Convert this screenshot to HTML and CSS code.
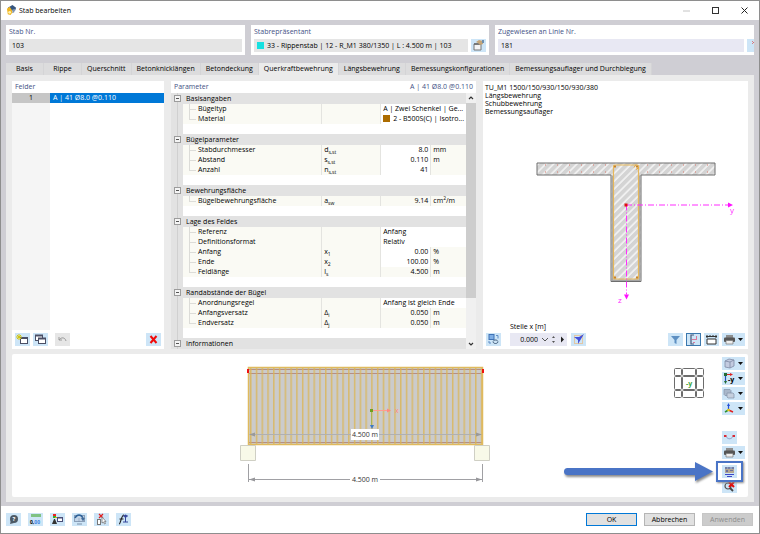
FILE: index.html
```html
<!DOCTYPE html>
<html lang="de">
<head>
  <meta charset="UTF-8" />
  <meta name="viewport" content="width=device-width, initial-scale=1.0"/>
  <title>Stab bearbeiten</title>
  <link rel="stylesheet" href="styles.css">
</head>
<body>
  <div class="dialog">
    <header class="titlebar">
      <svg class="app-icon" viewBox="0 0 12 12">
        <path d="M2 3 L7 0 L11 3 L10 6 L5 6Z" fill="#35557f"/>
        <path d="M1 4 L4 2 L6 5 L7 8 L5 11 L2 10Z" fill="#f0b51f"/>
        <circle cx="4" cy="8" r="1.5" fill="#fff3b0"/>
        <path d="M7 5 L10 4 L9 8 L7 9Z" fill="#7f93ad"/>
      </svg>
      <h1>Stab bearbeiten</h1>
      <button class="win-btn" aria-label="Minimieren" disabled><svg viewBox="0 0 9 9"><path d="M1 5h7" stroke="#c4c4c4"/></svg></button>
      <button class="win-btn" aria-label="Maximieren"><svg viewBox="0 0 9 9"><rect x="1.5" y="1.5" width="6" height="6" fill="none" stroke="#333"/></svg></button>
      <button class="win-btn" aria-label="Schließen"><svg viewBox="0 0 9 9"><path d="M1.500 1.500l6 6m0-6l-6 6" stroke="#222"/></svg></button>
    </header>

    <main class="workspace">
      <!-- Member number, representative, lines -->
      <section class="head-cards">
        <div class="card">
          <label for="memberNo">Stab Nr.</label>
          <div class="card-row"><input id="memberNo" class="field" type="text" value="103" readonly></div>
        </div>
        <div class="card">
          <label for="memberRep">Stabrepräsentant</label>
          <div class="card-row">
            <div class="field field-swatch">
              <span class="swatch cyan"></span>
              <input id="memberRep" type="text" value="33 - Rippenstab | 12 - R_M1 380/1350 | L : 4.500 m | 103" readonly>
            </div>
            <button class="icon-btn" aria-label="Bearbeiten"><svg viewBox="0 0 15 13"><path d="M3 5h7v6H3z" fill="#f4f4f4" stroke="#777"/><path d="M3 5h7" stroke="#666" stroke-width="1.500"/><path d="M5 3l3-2 4 1 0 3-3 1-2-2z" fill="#c4a578"/><path d="M11 1h2v3h-2z" fill="#6d8fb0"/></svg></button>
          </div>
        </div>
        <div class="card card-cut">
          <label for="lineNo">Zugewiesen an Linie Nr.</label>
          <div class="card-row">
            <input id="lineNo" class="field editable" type="text" value="181">
            <button class="icon-btn cut" aria-label="Auswählen"><svg viewBox="0 0 7 13"><path d="M5 2l2 2M5 5l2-2" stroke="#d66" stroke-width=".8"/></svg></button>
          </div>
        </div>
      </section>

      <nav class="tabs">
        <button class="tab wide">Basis</button>
        <button class="tab wide">Rippe</button>
        <button class="tab">Querschnitt</button>
        <button class="tab">Betonknicklängen</button>
        <button class="tab">Betondeckung</button>
        <button class="tab active">Querkraftbewehrung</button>
        <button class="tab">Längsbewehrung</button>
        <button class="tab">Bemessungskonfigurationen</button>
        <button class="tab">Bemessungsauflager und Durchbiegung</button>
      </nav>

      <div class="tab-page">
        <div class="panels">
          <!-- Field list -->
          <section class="panel spans">
            <h2 class="panel-title">Felder</h2>
            <div class="span-list">
              <table>
                <tr class="selected"><th scope="row">1</th><td>A | 41 Ø8.0 @0.110</td></tr>
              </table>
            </div>
            <div class="toolbar">
              <button class="icon-btn" aria-label="Neu"><svg viewBox="0 0 15 13"><rect x="5.500" y="4.500" width="7" height="6" fill="#fff" stroke="#4a4f66"/><path d="M5 5h8" stroke="#4a4f66" stroke-width="2"/><path d="M4 1v6M1 4h6M2 2l4 4M6 2L2 6" stroke="#d3c511"/></svg></button>
              <button class="icon-btn" aria-label="Kopieren"><svg viewBox="0 0 15 13"><rect x="2.500" y="2.500" width="7" height="5" fill="#fff" stroke="#4a4f66"/><path d="M2 2.500h8" stroke="#4a4f66" stroke-width="2"/><rect x="5.500" y="5.500" width="7" height="5" fill="#fff" stroke="#4a4f66"/><path d="M5 5.500h8" stroke="#4a4f66" stroke-width="2"/></svg></button>
              <button class="icon-btn off" aria-label="Rückgängig" disabled><svg viewBox="0 0 15 13"><path d="M4 4v3h3M4 7c2-3 6-3 7 1" fill="none" stroke="#9a9a9a"/></svg></button>
              <button class="icon-btn push" aria-label="Löschen"><svg viewBox="0 0 15 13"><path d="M4.500 3l6 7m0-7l-6 7" stroke="#f00a0a" stroke-width="2"/></svg></button>
            </div>
          </section>

          <!-- Parameter tree -->
          <section class="panel params">
            <h2 class="panel-title">Parameter <span>A | 41 Ø8.0 @0.110</span></h2>
            <div class="tree-wrap">
              <table class="tree">
                <colgroup><col class="c-gutter"><col class="c-name"><col class="c-sym"><col class="c-val"><col class="c-unit"></colgroup>
                <tr class="group"><td><button class="toggle" aria-label="Einklappen"></button></td><th colspan="4">Basisangaben</th></tr>
                <tr><td></td><td>Bügeltyp</td><td></td><td colspan="2" class="text">A | Zwei Schenkel | Ge...</td></tr>
                <tr class="last"><td></td><td>Material</td><td></td><td colspan="2" class="text"><span class="swatch brown"></span>2 - B500S(C) | Isotro...</td></tr>
                <tr class="empty"><td></td><td colspan="4"></td></tr>
                <tr class="group"><td><button class="toggle" aria-label="Einklappen"></button></td><th colspan="4">Bügelparameter</th></tr>
                <tr><td></td><td>Stabdurchmesser</td><td>d<sub>s,st</sub></td><td class="num">8.0</td><td>mm</td></tr>
                <tr><td></td><td>Abstand</td><td>s<sub>s,st</sub></td><td class="num">0.110</td><td>m</td></tr>
                <tr class="last"><td></td><td>Anzahl</td><td>n<sub>s,st</sub></td><td class="num">41</td><td></td></tr>
                <tr class="empty"><td></td><td colspan="4"></td></tr>
                <tr class="group"><td><button class="toggle" aria-label="Einklappen"></button></td><th colspan="4">Bewehrungsfläche</th></tr>
                <tr class="last"><td></td><td>Bügelbewehrungsfläche</td><td>a<sub>sw</sub></td><td class="num locked">9.14</td><td>cm<sup>2</sup>/m</td></tr>
                <tr class="empty"><td></td><td colspan="4"></td></tr>
                <tr class="group"><td><button class="toggle" aria-label="Einklappen"></button></td><th colspan="4">Lage des Feldes</th></tr>
                <tr><td></td><td>Referenz</td><td></td><td colspan="2" class="text">Anfang</td></tr>
                <tr><td></td><td>Definitionsformat</td><td></td><td colspan="2" class="text">Relativ</td></tr>
                <tr><td></td><td>Anfang</td><td>x<sub>1</sub></td><td class="num">0.00</td><td>%</td></tr>
                <tr><td></td><td>Ende</td><td>x<sub>2</sub></td><td class="num">100.00</td><td>%</td></tr>
                <tr class="last"><td></td><td>Feldlänge</td><td>l<sub>s</sub></td><td class="num locked">4.500</td><td>m</td></tr>
                <tr class="empty"><td></td><td colspan="4"></td></tr>
                <tr class="group"><td><button class="toggle" aria-label="Einklappen"></button></td><th colspan="4">Randabstände der Bügel</th></tr>
                <tr><td></td><td>Anordnungsregel</td><td></td><td colspan="2" class="text">Anfang ist gleich Ende</td></tr>
                <tr><td></td><td>Anfangsversatz</td><td>Δ<sub>i</sub></td><td class="num locked">0.050</td><td>m</td></tr>
                <tr class="last"><td></td><td>Endversatz</td><td>Δ<sub>j</sub></td><td class="num locked">0.050</td><td>m</td></tr>
                <tr class="empty"><td></td><td colspan="4"></td></tr>
                <tr class="group"><td><button class="toggle" aria-label="Einklappen"></button></td><th colspan="4">Informationen</th></tr>
              </table>
              <div class="scrollbar">
                <svg viewBox="0 0 10 10"><path d="M3 6l2-2 2 2" fill="none" stroke="#333" stroke-width="1.200"/></svg>
                <span class="thumb"></span>
                <svg viewBox="0 0 10 10"><path d="M3 4l2 2 2-2" fill="none" stroke="#333" stroke-width="1.200"/></svg>
              </div>
            </div>
          </section>

          <!-- Cross-section preview -->
          <section class="panel preview">
            <p class="legend">TU_M1 1500/150/930/150/930/380<br>Längsbewehrung<br>Schubbewehrung<br>Bemessungsauflager</p>
            <svg class="section-svg" viewBox="0 0 265 203">
              <defs>
                <pattern id="hatch" width="5.500" height="5.500" patternUnits="userSpaceOnUse" patternTransform="rotate(45)">
                  <rect width="6" height="6" fill="#d4d4d4"/>
                  <path d="M1 0v6" stroke="#fff" stroke-width="1.200"/>
                </pattern>
              </defs>
              <path d="M54 46.500H232V58.500H158V165H128V58.500H54Z" fill="url(#hatch)" stroke="#6e6e6e" stroke-width="1"/>
              <path d="M129.200 59V163.800H156.800V59" fill="none" stroke="#a5a5a5" stroke-width="1.400"/>
              <rect x="130.500" y="48.500" width="25" height="114" rx="1" fill="none" stroke="#e6b75a" stroke-width="1.200"/>
              <path d="M153 48l-2 3M156 51l-3 2" stroke="#e6a93a"/>
              <g fill="#d9796a">
                <path d="M62 48h1v1h-1zM74 48h1v1h-1zM86 48h1v1h-1zM98 48h1v1h-1zM110 48h1v1h-1zM122 48h1v1h-1zM164 48h1v1h-1zM176 48h1v1h-1zM188 48h1v1h-1zM200 48h1v1h-1zM212 48h1v1h-1zM224 48h1v1h-1z"/>
                <path d="M62 55h1v1h-1zM74 55h1v1h-1zM86 55h1v1h-1zM98 55h1v1h-1zM110 55h1v1h-1zM122 55h1v1h-1zM164 55h1v1h-1zM176 55h1v1h-1zM188 55h1v1h-1zM200 55h1v1h-1zM212 55h1v1h-1zM224 55h1v1h-1z"/>
                <path d="M131 49h2v2h-2zM153 49h2v2h-2zM131 160h2v2h-2zM153 160h2v2h-2z" fill="#c98328"/>
              </g>
              <path d="M143 88.500H246M143.500 88V178" fill="none" stroke="#ff2cff" stroke-dasharray="6 2 1 2"/>
              <path d="M245 86l5 2.500-5 2.500zM141 178h5l-2.500 5z" fill="#ff10ff"/>
              <rect x="141.500" y="87" width="3" height="3" fill="#e01010"/>
              <text x="247" y="96" class="axis">y</text>
              <text x="135" y="186" class="axis">z</text>
            </svg>
            <div class="toolbar">
              <button class="icon-btn" aria-label="Ansicht wechseln"><svg viewBox="0 0 15 13"><rect x="3" y="1.500" width="5" height="5" fill="#7eaee5" stroke="#3f72b5"/><path d="M7 8.500c1-2 4-2 5 0M12 9c-1 2-4 2-5 0" fill="none" stroke="#3c5675"/><path d="M10 2.500h2v3M3 8v2h2" fill="none" stroke="#5f8cc5"/></svg></button>
              <div class="location">
                <label for="loc">Stelle x [m]</label>
                <div class="spin">
                  <input id="loc" type="text" value="0.000">
                  <button aria-label="Liste"><svg viewBox="0 0 9 13"><path d="M2 5l3 3 3-3" fill="none" stroke="#555"/></svg></button>
                  <button aria-label="Schritt"><svg viewBox="0 0 9 13"><path d="M3 5l1.500-2L6 5zM3 8l1.500 2L6 8z" fill="#555"/></svg></button>
                  <button aria-label="Weiter"><svg viewBox="0 0 9 13"><path d="M3 3.500v6l3-3z" fill="#222"/></svg></button>
                </div>
              </div>
              <button class="icon-btn" aria-label="Stelle wählen"><svg viewBox="0 0 15 13"><rect x="3.500" y="2.500" width="8" height="8" fill="none" stroke="#e2c7a5"/><path d="M3 4h5l5-3-6 10V7z" fill="#4450d8"/></svg></button>
              <button class="icon-btn push" aria-label="Filter"><svg viewBox="0 0 15 13"><path d="M3 3h9L8.500 7v4l-2-1V7z" fill="#5d8fc2"/></svg></button>
              <button class="icon-btn pressed" aria-label="Bewehrung zeigen"><svg viewBox="0 0 15 13"><path d="M8 2H5v9h3" fill="none" stroke="#4a5878" stroke-width="1.200"/><path d="M6 6.500h4M10.500 3v4M7 9.500h2" stroke="#d9799c"/></svg></button>
              <button class="icon-btn" aria-label="Maße"><svg viewBox="0 0 15 13"><path d="M3 6h9v5H3z" fill="#fff" stroke="#333"/><path d="M2 3.500h11M3 2v3M12 2v3M6 2v1M9 2v1" stroke="#333"/></svg></button>
              <button class="icon-btn drop" aria-label="Drucken"><svg viewBox="0 0 23 13"><path d="M4 2h7v3H4z" fill="#8d8d8d"/><rect x="2" y="4.500" width="11" height="4.500" rx="1" fill="#555"/><path d="M4 7.500h7V11H4z" fill="#eee" stroke="#777" stroke-width=".7"/><path d="M16 5h5l-2.500 3z" fill="#111"/></svg></button>
            </div>
          </section>
        </div>

        <!-- Member view -->
        <section class="panel member-view">
          <svg class="beam-svg" viewBox="0 0 706 143">
            <defs>
              <pattern id="stirrups" x="238" width="5.770" height="10" patternUnits="userSpaceOnUse">
                <path d="M.8 0v10" stroke="#dcb552" stroke-width="1.200"/>
              </pattern>
            </defs>
            <rect x="236.500" y="13.500" width="234" height="77" fill="#cbcbcb"/>
            <path d="M237 15.500H470M237 19.500H470M237 88.500H470" stroke="#b78f82"/>
            <rect x="236" y="14" width="234" height="76" fill="url(#stirrups)"/>
            <rect x="236.500" y="13.500" width="234" height="77" fill="none" stroke="#e0ba5d" stroke-width="1.500"/>
            <path d="M235 15h2v4h-2zM470 15h2v4h-2z" fill="#f01010"/>
            <path d="M238 80.500H469" stroke="#b0b0b0"/>
            <path d="M237 80.500l6-2v4zM470 80.500l-6-2v4z" fill="#999"/>
            <path d="M359.500 56v15" stroke="#a7b556"/>
            <path d="M360 56.500h16" stroke="#ff9c90"/>
            <path d="M375 54.500l4 2-4 2z" fill="#ff8a80"/>
            <rect x="358" y="55" width="3" height="3" fill="#6f9f20"/>
            <path d="M358 71h4l-2 4z" fill="#3e7bc4"/>
            <text x="383" y="59" class="axis-x">x</text>
            <rect x="339" y="75" width="28" height="11" fill="#fff"/>
            <text x="353" y="83" class="dim">4.500 m</text>
            <path d="M228.500 91.500h15v15h-15zM462.500 91.500h15v15h-15z" fill="#f8f9e8" stroke="#cfcfc4"/>
            <path d="M236.500 110v18M470.500 110v18M237 125.500H338M368 125.500H470" stroke="#a0a0a4"/>
            <path d="M237 125.500l6-2v4zM470 125.500l-6-2v4z" fill="#97979b"/>
            <text x="353" y="128" class="dim">4.500 m</text>
          </svg>
          <svg class="nav-cube" viewBox="0 0 31 31">
            <g fill="#fff" stroke="#6c6c6c">
              <rect x=".5" y=".5" width="7" height="7" rx="1"/><rect x="8.500" y=".5" width="13" height="7" rx="1"/><rect x="22.500" y=".5" width="7" height="7" rx="1"/>
              <rect x=".5" y="8.500" width="7" height="13" rx="1"/><rect x="8.500" y="8.500" width="13" height="13" rx="1"/><rect x="22.500" y="8.500" width="7" height="13" rx="1"/>
              <rect x=".5" y="22.500" width="7" height="7" rx="1"/><rect x="8.500" y="22.500" width="13" height="7" rx="1"/><rect x="22.500" y="22.500" width="7" height="7" rx="1"/>
            </g>
            <text x="15" y="18" class="cube-text">-y</text>
          </svg>
          <div class="side-tools">
            <button class="icon-btn drop" aria-label="Darstellung"><svg viewBox="0 0 23 13"><path d="M3 4l4-2 5 1v6l-4 2-5-1z" fill="#c3cbe0" stroke="#7f8aa5" stroke-width=".8"/><path d="M3 4l5 1 4-2M8 5v6" fill="none" stroke="#7f8aa5" stroke-width=".8"/><path d="M16 5h5l-2.500 3z" fill="#111"/></svg></button>
            <button class="icon-btn drop" aria-label="Blickrichtung"><svg viewBox="0 0 23 13"><path d="M3 2.500h6" stroke="#d22"/><path d="M3.500 3v7" stroke="#2450b8" stroke-width="1.200"/><path d="M2 9h3l-1.500 3zM2 1h3v3h-3z" fill="#246c36"/><path d="M8 1l3 1.500L8 4z" fill="#d22"/><text x="6" y="10" class="tool-text">-y</text><path d="M16 5h5l-2.500 3z" fill="#111"/></svg></button>
            <button class="icon-btn drop" aria-label="Ebenen"><svg viewBox="0 0 23 13"><path d="M2 2.500h6l1 1v5H3l-1-1z" fill="#a9b7ca" stroke="#8291a8" stroke-width=".7"/><path d="M5 6h6l1 1v4H6l-1-1z" fill="#c5cfde" stroke="#8291a8" stroke-width=".7"/><path d="M16 5h5l-2.500 3z" fill="#111"/></svg></button>
            <button class="icon-btn drop" aria-label="Achsen"><svg viewBox="0 0 23 13"><path d="M6.500 8V3" stroke="#2450d8" stroke-width="1.200"/><path d="M5 4l1.500-3L8 4z" fill="#2450d8"/><path d="M6.500 8L11 10" stroke="#e02020" stroke-width="1.500"/><path d="M6.500 8L3 10" stroke="#2c8f34" stroke-width="1.500"/><circle cx="6.500" cy="8" r="1.300" fill="#e8d018"/><path d="M16 5h5l-2.500 3z" fill="#111"/></svg></button>
            <button class="icon-btn second" aria-label="Auflager"><svg viewBox="0 0 15 13"><path d="M4 5.500c2 3 5 3 7 0" fill="none" stroke="#8c9ac8"/><path d="M2 4h2.500v2H2zM10.500 4H13v2h-2.500z" fill="#d92b35"/></svg></button>
            <button class="icon-btn drop" aria-label="Drucken"><svg viewBox="0 0 23 13"><path d="M4 2h7v3H4z" fill="#8d8d8d"/><rect x="2" y="4.500" width="11" height="4.500" rx="1" fill="#555"/><path d="M4 7.500h7V11H4z" fill="#eee" stroke="#777" stroke-width=".7"/><path d="M16 5h5l-2.500 3z" fill="#111"/></svg></button>
            <div class="marked">
              <button class="icon-btn" aria-label="Bewehrung"><svg viewBox="0 0 15 13"><path d="M3 3h9M4 2v2M7 2v2M11 2v2" stroke="#555d88"/><path d="M3 4h9v4H3z" fill="#b5a690"/><path d="M4 5h2v2H4zM8 5h3v1H8z" fill="#6a6d9c"/><path d="M3 9.500h9M5 11.500h5" stroke="#3d46c8"/></svg></button>
              <svg class="pointer" viewBox="0 0 154 28">
                <path d="M7.500 12.500H136" stroke="#4a74c6" stroke-width="7" stroke-linecap="round"/>
                <path d="M135 3L153 12.500 135 22Z" fill="#4a74c6"/>
              </svg>
            </div>
            <button class="icon-btn" aria-label="Zoom aufheben"><svg viewBox="0 0 15 13"><circle cx="6" cy="6" r="3" fill="none" stroke="#555" stroke-width="1.200"/><path d="M8 8l3 3" stroke="#444" stroke-width="1.800"/><path d="M7 2l5 5m0-5L7 7" stroke="#e30b0b" stroke-width="2"/></svg></button>
          </div>
        </section>
      </div>
    </main>

    <footer>
      <button class="icon-btn" aria-label="Hilfe"><svg viewBox="0 0 15 13"><circle cx="8" cy="6" r="4" fill="#4d5a66"/><path d="M4 11l1-4 3 3z" fill="#4d5a66"/><text x="8" y="8" class="help-text">?</text></svg></button>
      <button class="icon-btn" aria-label="Einheiten"><svg viewBox="0 0 15 13"><path d="M3 1h10v3H3z" fill="#7fc283"/><text x="2" y="11" class="unit-text">0,<tspan fill="#3c7fe0">00</tspan></text></svg></button>
      <button class="icon-btn" aria-label="Farben"><svg viewBox="0 0 15 13"><path d="M3 1h3v2H3z" fill="#e22"/><path d="M3 3h3v2H3z" fill="#3a3"/><path d="M2 11l2-5h1l2 5z" fill="#333"/><path d="M5 4h3v1H5z" fill="#dba800"/><rect x="7.500" y="4.500" width="5" height="4" fill="#fff" stroke="#4a4f78"/><path d="M7 5h6" stroke="#4a4f78"/></svg></button>
      <button class="icon-btn" aria-label="Ansicht"><svg viewBox="0 0 15 13"><rect x="2.500" y="2.500" width="10" height="6" fill="#c3d5e8" stroke="#8a9fb8"/><path d="M3 5c2-4 6-4 8 0" fill="none" stroke="#2d6198" stroke-width="1.500"/><path d="M9 5h4l-2 3zM7 5v4" fill="#2d6198" stroke="#7a8fa8" stroke-width=".5"/><path d="M5 11h5" stroke="#7a8fa8"/></svg></button>
      <button class="icon-btn" aria-label="Auswahl aufheben"><svg viewBox="0 0 15 13"><path d="M5 1l4 4m0-4L5 5" stroke="#e02020" stroke-width="1.200"/><rect x="3.500" y="6.500" width="3" height="5" fill="#fff" stroke="#777"/><path d="M8 4v6l1.500-1 1 2 1-.5-1-2H12z" fill="#fff" stroke="#777" stroke-width=".8"/></svg></button>
      <button class="icon-btn" aria-label="Formel"><svg viewBox="0 0 15 13"><path d="M3 11c2 0 2-9 5-9M3.500 6h4" fill="none" stroke="#222" stroke-width="1.200"/><path d="M7 3h5M7 9h5M9.500 3v6" stroke="#35459a"/><circle cx="9.500" cy="3" r="1.500" fill="#35459a"/></svg></button>
      <button class="dlg-btn default push">OK</button>
      <button class="dlg-btn">Abbrechen</button>
      <button class="dlg-btn" disabled>Anwenden</button>
    </footer>
  </div>
</body>
</html>
```

FILE: styles.css
```css
*, *::after {
  box-sizing: border-box;
}
body {
  margin: 0;
  font-family: "Open Sans", "Noto Sans", sans-serif;
  font-size: 7px;
  line-height: 10px;
  color: #000;
}
h1, h2, p {
  margin: 0;
  font-size: 7px;
  font-weight: normal;
}
button, input {
  font: inherit;
  color: inherit;
  border: none;
  padding: 0;
  margin: 0;
  background: none;
}
svg {
  display: block;
}
table {
  border-collapse: collapse;
  width: 100%;
}
td, th {
  padding: 0;
  font-weight: normal;
  text-align: left;
}
.dialog {
  display: flex;
  flex-direction: column;
  min-height: 100vh;
  border: 1px solid #8e8e8e;
  background-color: #fff;
}

/* title bar */
.titlebar {
  display: flex;
  align-items: center;
  height: 19px;
  padding: 0 10px 0 5px;
}
.titlebar h1 {
  flex: 1;
  margin-left: 2px;
}
.app-icon {
  width: 11px;
  height: 11px;
}
.win-btn {
  margin-left: 20px;
}
.win-btn svg {
  width: 9px;
  height: 9px;
}

.workspace {
  flex: 1;
  display: flex;
  flex-direction: column;
  padding: 5px 5px 4px;
  background-color: #cfced4;
}

/* head cards */
.head-cards {
  display: grid;
  grid-template-columns: 239fr 238fr 259fr;
  gap: 6px;
  margin-bottom: 8px;
}
.card {
  padding: 0 3px 3px;
  background-color: #fff;
  min-width: 0;
}
.card-cut {
  padding-right: 0;
}
.card label {
  display: block;
  line-height: 14px;
}
.card label,
.panel-title {
  color: #3f5285;
}
.card-row {
  display: flex;
  gap: 3px;
}
.field {
  flex: 1;
  min-width: 0;
  height: 13px;
  padding: 0 3px;
  background-color: #e5e5e5;
}
.field.editable {
  background-color: #e8e8f3;
}
.field-swatch {
  display: flex;
  align-items: center;
  gap: 3px;
}
.field-swatch input {
  flex: 1;
  min-width: 0;
}
.swatch {
  display: inline-block;
  width: 7px;
  height: 7px;
}
.cyan {
  background-color: #18e0e0;
}
.brown {
  background-color: #ac6c00;
  margin-right: 3px;
}

.icon-btn {
  flex: none;
  width: 15px;
  height: 13px;
  background-color: #cde5f7;
}
.icon-btn svg {
  width: 100%;
  height: 100%;
}
.icon-btn.drop {
  width: 23px;
}
.icon-btn.cut {
  width: 7px;
}
.icon-btn.off {
  margin-left: 4px;
  background-color: #e6e6e6;
}
.icon-btn.pressed {
  outline: 1px solid #3b78ae;
  outline-offset: -1px;
}
.push {
  margin-left: auto;
}

/* tabs */
.tabs {
  display: flex;
}
.tab {
  height: 12px;
  padding: 0 5px;
  background-color: #dcdcdd;
  border-right: 1px solid #d4d4d6;
  white-space: nowrap;
}
.tab.wide {
  width: 38px;
}
.tab.active {
  background-color: #ebebeb;
}
.tab-page {
  flex: 1;
  display: flex;
  flex-direction: column;
  gap: 5px;
  padding: 6px 6px 5px;
  background-color: #ebebeb;
}
.panels {
  display: grid;
  grid-template-columns: 152fr 305fr 265fr;
  gap: 7px;
}
.panel {
  display: flex;
  min-width: 0;
  background-color: #fff;
}
.spans, .params, .preview {
  flex-direction: column;
}
.panel-title {
  display: flex;
  justify-content: space-between;
  padding: 0 3px;
  line-height: 12px;
}
.toolbar {
  display: flex;
  align-items: flex-end;
  gap: 3px;
  padding: 3px;
}

/* field list */
.span-list {
  flex: 1;
  background: linear-gradient(to right, #f5f5f5 38px, #fff 38px);
}
.selected th {
  width: 38px;
  text-align: center;
  background-color: #c6c6c6;
}
.selected td {
  padding-left: 3px;
  color: #fff;
  background-color: #0078d7;
}

/* parameter tree */
.tree-wrap {
  display: flex;
}
.tree {
  flex: 1;
  table-layout: fixed;
}
.c-gutter { width: 12px; }
.c-name { width: 47%; }
.c-sym { width: 20%; }
.c-val { width: 17%; }
.tree tr {
  height: 10px;
}
.tree td {
  background-color: #fafaf4;
  white-space: nowrap;
  line-height: 10px;
}
.tree td:nth-child(1) {
  background: linear-gradient(#d0d0d0, #d0d0d0) 6px 0 / 1px 100% no-repeat #e2e2e2;
}
.tree td:nth-child(2) {
  padding-left: 15px;
  background-image: linear-gradient(#dcdcd8, #dcdcd8), linear-gradient(#dcdcd8, #dcdcd8);
  background-position: 6px 0, 6px 5px;
  background-size: 1px 100%, 7px 1px;
  background-repeat: no-repeat;
}
.tree .last td:nth-child(2) {
  background-size: 1px 5px, 7px 1px;
}
.tree td:nth-child(n+3) {
  padding-left: 2px;
  border-left: 1px solid #e4e4e0;
}
.tree .num,
.tree .text {
  background-color: #fff;
}
.tree .num {
  padding-right: 2px;
  text-align: right;
}
.tree .locked {
  background-color: #fafaf4;
}
.tree .swatch {
  vertical-align: -1px;
}
.tree .empty td:nth-child(2) {
  background: #fff;
}
.tree .group {
  height: 11px;
}
.tree .group th {
  padding-left: 3px;
  background-color: #e2e2e2;
}
.tree sub,
.tree sup {
  font-size: 5px;
  line-height: 0;
}
.toggle {
  display: block;
  width: 7px;
  height: 7px;
  margin-left: 3px;
  border: 1px solid #9c9c9c;
  background: linear-gradient(#555, #555) 1px 2px / 3px 1px no-repeat #f4f4f4;
}
.scrollbar {
  display: flex;
  flex-direction: column;
  width: 10px;
  background-color: #f0f0f0;
}
.scrollbar svg {
  width: 10px;
  height: 10px;
}
.thumb {
  flex: 0 1 60px;
  min-height: 195px;
  background-color: #cdcdcd;
}
.scrollbar svg:last-child {
  margin-top: auto;
}

/* cross-section preview */
.preview {
  justify-content: space-between;
}
.legend {
  padding: 3px 2px 0;
  line-height: 8px;
}
.section-svg {
  flex: 1;
  width: 100%;
  min-height: 0;
  height: 203px;
}
.axis {
  font-size: 8px;
  fill: #ff2cff;
}
.preview .toolbar {
  padding-top: 0;
}
.location {
  margin: 0 1px 0 6px;
}
.location label {
  display: block;
  line-height: 13px;
}
.spin {
  display: flex;
  height: 13px;
  width: 57px;
  background-color: #e8e8f3;
}
.spin input {
  width: 30px;
  text-align: right;
  padding-right: 2px;
}
.spin button,
.spin svg {
  width: 9px;
  height: 13px;
}

/* member view */
.member-view {
  position: relative;
  flex: 1;
  border-radius: 2px;
}
.beam-svg {
  flex: 1;
  min-width: 0;
  height: 143px;
}
.dim {
  font-size: 7px;
  text-anchor: middle;
  fill: #333;
}
.axis-x {
  font-size: 7px;
  fill: #ff8a80;
}
.nav-cube {
  position: absolute;
  top: 14px;
  right: 43px;
  width: 31px;
  height: 31px;
}
.cube-text {
  font-size: 7px;
  font-weight: bold;
  text-anchor: middle;
  fill: #3fa63f;
}
.side-tools {
  display: flex;
  flex-direction: column;
  gap: 2px;
  width: 30px;
  padding: 3px 0 0 4px;
}
.side-tools .second {
  margin-top: 14px;
}
.marked {
  position: relative;
  height: 13px;
  margin-top: 4px;
}
.marked::after {
  content: "";
  position: absolute;
  left: -6px;
  top: -4px;
  width: 27px;
  height: 21px;
  border: 2px solid #4a74c6;
  box-shadow: 1px 1px 2px #8c8c8c;
}
.pointer {
  position: absolute;
  right: 34px;
  top: -6px;
  width: 154px;
  height: 28px;
  filter: drop-shadow(1px 2px 1px #8c8c8c);
}
.tool-text {
  font-size: 7px;
  font-weight: bold;
}

/* footer */
footer {
  display: flex;
  align-items: center;
  gap: 7px;
  height: 27px;
  padding: 0 6px 0 5px;
}
.help-text {
  font-size: 6px;
  font-weight: bold;
  text-anchor: middle;
  fill: #fff;
}
.unit-text {
  font-size: 5px;
  font-weight: bold;
}
.dlg-btn {
  width: 51px;
  height: 13px;
  border: 1px solid #b5b5b5;
  background-color: #e1e1e1;
}
.dlg-btn.default {
  border-color: #0078d7;
}
.dlg-btn.push {
  margin-left: auto;
}
.dlg-btn:disabled {
  color: #8c8c8c;
  border-color: #c6c6c6;
  background-color: #cccccc;
}
```
